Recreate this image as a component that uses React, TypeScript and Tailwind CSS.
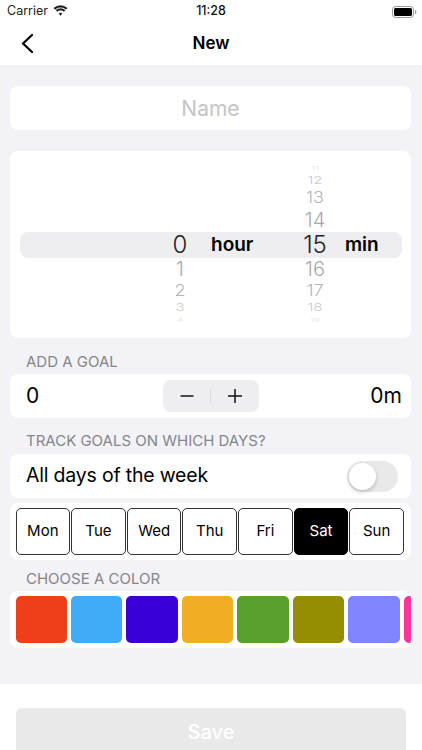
const sf = "font-['Inter','Liberation_Sans',sans-serif]";

// row styles of the wheel, from the far top row to the far bottom row
const wheelStyles = [
	"h-[10px] text-[10px] leading-[10px] text-[#e2e2e4] scale-y-[0.45]",
	"h-[15px] text-[15px] leading-[15px] text-[#c9c9cc] scale-y-[0.72]",
	"h-[20px] text-[18px] leading-[20px] text-[#b4b4b7] scale-y-[0.88]",
	"h-[24px] text-[20px] leading-[24px] text-[#a9a9ac] scale-y-[0.97]",
	"h-[25px] text-[24px] leading-[25px] text-[#222224]",
	"h-[24px] text-[20px] leading-[24px] text-[#a9a9ac] scale-y-[0.97]",
	"h-[19px] text-[18px] leading-[19px] text-[#b4b4b7] scale-y-[0.88]",
	"h-[15px] text-[15px] leading-[15px] text-[#c9c9cc] scale-y-[0.72]",
	"h-[11px] text-[10px] leading-[11px] text-[#e2e2e4] scale-y-[0.45]",
];

const days = ["Mon", "Tue", "Wed", "Thu", "Fri", "Sat", "Sun"];
const colors = [
	"bg-[#ee3f1a]",
	"bg-[#3eacf9]",
	"bg-[#3a00d8]",
	"bg-[#f1ae25]",
	"bg-[#589f2c]",
	"bg-[#958e00]",
	"bg-[#7f84ff]",
	"bg-[#fb3499]",
];

function Wheel({ values, start, className }: { values: string[]; start: number; className: string }) {
	return (
		<div className={`flex flex-col items-center font-light ${className}`}>
			{values.map((v, i) => (
				<div key={v} className={`${wheelStyles[start + i]} whitespace-nowrap`}>
					{v}
				</div>
			))}
		</div>
	);
}

function SectionLabel({ children }: { children: string }) {
	return (
		<div className="pl-[16px] text-[15px] leading-[18px] text-[#85858b]">
			{children}
		</div>
	);
}

export default function App() {
	return (
		<div className={`w-[422px] h-[750px] overflow-hidden bg-white flex flex-col ${sf}`}>
			{/* status bar */}
			<div className="h-[22px] shrink-0 flex items-center justify-between pt-[1px] pl-[7px] pr-[5px] relative">
				<div className="flex items-center gap-[5px] text-[12.5px] text-[#222]">
					<span>Carrier</span>
					<svg className="-mt-[2px]" width="15" height="11" viewBox="0 0 15 11" fill="#111" stroke="#111" strokeWidth="0.3">
						<path d="M7.5 2.2c2.1 0 4 .8 5.5 2.2l1.2-1.3A9.7 9.7 0 0 0 7.5.4 9.7 9.7 0 0 0 .8 3.1L2 4.4a8 8 0 0 1 5.500-2.200z" />
						<path d="M7.5 5.2c1.3 0 2.5.5 3.4 1.3l1.2-1.3a6.8 6.8 0 0 0-9.2 0l1.2 1.3c.9-.8 2.100-1.300 3.400-1.300z" />
						<path d="M7.5 8c-.7 0-1.200.2-1.700.6l1.700 1.900 1.700-1.900C8.700 8.200 8.200 8 7.500 8z" />
					</svg>
				</div>
				<span className="absolute left-0 right-0 text-center text-[12.5px] font-medium text-[#111]">
					11:28
				</span>
				<svg width="25" height="12" viewBox="0 0 25 12">
					<rect x="0.5" y="0.5" width="21" height="11" rx="3" fill="none" stroke="#9a9a9a" />
					<rect x="2" y="2" width="18" height="8" rx="1.500" fill="#000" />
					<rect x="23" y="4" width="1.200" height="4" rx="0.600" fill="#9a9a9a" />
				</svg>
			</div>

			{/* nav bar */}
			<div className="h-[43px] shrink-0 flex items-center relative">
				<svg className="absolute left-[20px] top-[11px]" width="15" height="20" viewBox="0 0 15 20" fill="none" stroke="#000" strokeWidth="2.200" strokeLinecap="round" strokeLinejoin="round">
					<path d="M12 2 L3 10.500 L12 19" />
				</svg>
				<div className="w-full text-center text-[17px] font-semibold text-black">New</div>
			</div>

			{/* form */}
			<div className="h-[619px] bg-[#f2f2f7] flex flex-col pl-[10px] pr-[11px] pt-[21px] shrink-0">
				<div className="h-[44px] shrink-0 pt-[1px] bg-white rounded-[8px] flex items-center justify-center text-[21px] text-[#c4c4c6]">
					Name
				</div>

				<div className="relative mt-[21px] h-[187px] bg-white rounded-[8px] shrink-0">
					<div className="absolute left-[10px] right-[9px] top-[81px] h-[26px] rounded-[8px] bg-[#eeeef0]" />
					<Wheel
						className="absolute left-[160px] top-[81px] w-[20px]"
						start={4}
						values={["0", "1", "2", "3", "4"]}
					/>
					<div className="absolute left-[201px] top-[81px] h-[26px] flex items-center text-[19px] font-semibold text-black">
						hour
					</div>
					<Wheel
						className="absolute left-[291px] top-[12px] w-[28px]"
						start={0}
						values={["11", "12", "13", "14", "15", "16", "17", "18", "19"]}
					/>
					<div className="absolute left-[335px] top-[81px] h-[26px] flex items-center text-[19px] font-semibold text-black">
						min
					</div>
				</div>

				<div className="mt-[15px]">
					<SectionLabel>ADD A GOAL</SectionLabel>
				</div>
				<div className="mt-[3px] h-[44px] shrink-0 bg-white rounded-[8px] flex items-center justify-between pl-[16px] pr-[9px] relative">
					<span className="text-[21px] text-black">0</span>
					<div className="absolute left-[153px] top-[6px] w-[96px] h-[32px] rounded-[8px] bg-[#eeeef0] flex items-center">
						<div className="w-[48px] flex justify-center border-r border-[#dcdcde]">
							<svg width="16" height="16" viewBox="0 0 16 16" stroke="#111" strokeWidth="1.500">
								<path d="M1.500 8 H14.500" />
							</svg>
						</div>
						<div className="w-[48px] flex justify-center">
							<svg width="16" height="16" viewBox="0 0 16 16" stroke="#111" strokeWidth="1.500">
								<path d="M1 8 H15 M8 1 V15" />
							</svg>
						</div>
					</div>
					<span className="text-[21px] text-black">0m</span>
				</div>

				<div className="mt-[14px]">
					<SectionLabel>TRACK GOALS ON WHICH DAYS?</SectionLabel>
				</div>
				<div className="mt-[4px] h-[44px] shrink-0 bg-white rounded-[8px] flex items-center justify-between pl-[16px] pr-[13px]">
					<span className="text-[19.5px] tracking-[-0.2px] text-black">All days of the week</span>
					<div className="w-[51px] h-[31px] rounded-full bg-[#e9e9ea] p-[2px]">
						<div className="w-[27px] h-[27px] rounded-full bg-white shadow-[0_2px_4px_rgba(0,0,0,0.2)]" />
					</div>
				</div>

				<div className="mt-[5px] h-[57px] shrink-0 bg-white rounded-[8px] flex items-center gap-[1px] pl-[5.5px] pr-[7px]">
					{days.map((d) => (
						<div
							key={d}
							className={`flex-1 h-[47px] rounded-[5px] border-[1.5px] border-[#333] flex items-center justify-center text-[15px] ${d === "Sat" ? "bg-black text-white border-black" : "bg-white text-black"}`}
						>
							{d}
						</div>
					))}
				</div>

				<div className="mt-[10px]">
					<SectionLabel>CHOOSE A COLOR</SectionLabel>
				</div>
				<div className="mt-[3px] h-[57px] shrink-0 bg-white rounded-[8px] flex items-center gap-[4.2px] pl-[5.5px] overflow-hidden">
					{colors.map((c) => (
						<div key={c} className={`w-[51.3px] h-[47px] rounded-[5px] shrink-0 ${c}`} />
					))}
				</div>
			</div>

			{/* save */}
			<div className="shrink-0 bg-white px-[16px] pt-[24px]">
				<div className="h-[50px] pb-[2px] rounded-[6px] bg-[#e9e9ea] flex items-center justify-center text-[20px] font-medium text-white">
					Save
				</div>
			</div>
		</div>
	);
}
